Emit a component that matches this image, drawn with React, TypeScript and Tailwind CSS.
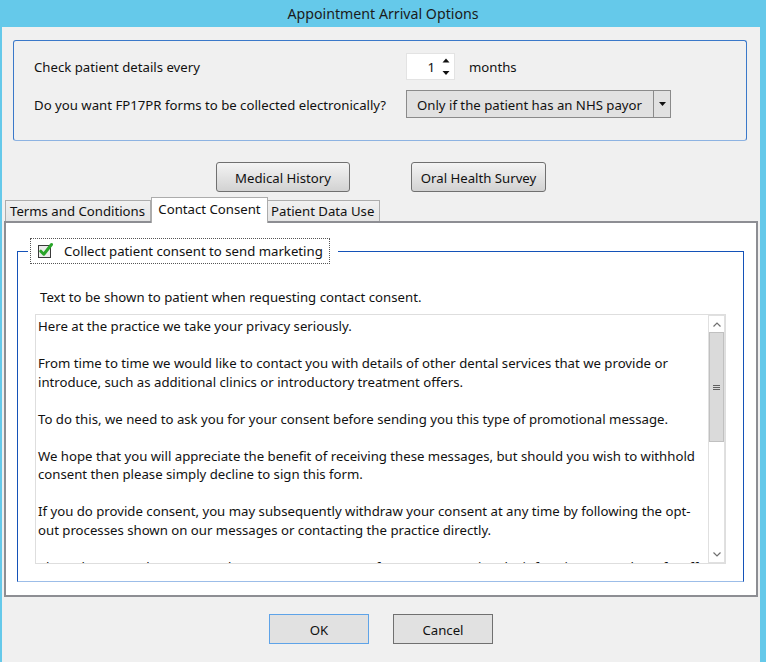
import React from "react";

const lines = [
  "Here at the practice we take your privacy seriously.",
  "",
  "From time to time we would like to contact you with details of other dental services that we provide or",
  "introduce, such as additional clinics or introductory treatment offers.",
  "",
  "To do this, we need to ask you for your consent before sending you this type of promotional message.",
  "",
  "We hope that you will appreciate the benefit of receiving these messages, but should you wish to withhold",
  "consent then please simply decline to sign this form.",
  "",
  "If you do provide consent, you may subsequently withdraw your consent at any time by following the opt-",
  "out processes shown on our messages or contacting the practice directly.",
  "",
  "Please be aware that you can change your consent preferences at any time by informing a member of staff.",
];

export default function App() {
  return (
    <div className="w-[766px] h-[662px] overflow-hidden bg-[#65c9ea] flex flex-col font-['Noto_Sans',sans-serif] text-[#111]">
      <div className="h-[27px] shrink-0 flex items-center justify-center text-[14.2px] text-[#1b1b1b]">
        Appointment Arrival Options
      </div>
      <div className="flex-1 ml-[2px] mr-[6px] bg-[#f0f0f0] flex flex-col text-[13.2px]">
        {/* top group */}
        <div className="shrink-0 mt-[13px] ml-[11px] mr-[13px] h-[101px] rounded-[3px] border border-[#3a78c9] border-b-[#8db3e2] pl-[20px] pt-[12px] flex flex-col gap-[10px]">
          <div className="flex items-center h-[27px]">
            <div className="w-[372px] pt-[3px]">Check patient details every</div>
            <div className="w-[49px] h-[27px] bg-white border border-[#e3e3e3] flex items-center justify-end pr-[4px]">
              <span className="mr-[7px] pt-[3px]">1</span>
              <svg width="8" height="18" viewBox="0 0 8 18">
                <path d="M0.5 4.5 L4 0.5 L7.5 4.5 Z" fill="#111" />
                <path d="M0.5 13 L4 17 L7.5 13 Z" fill="#111" />
              </svg>
            </div>
            <div className="ml-[14px] pt-[3px]">months</div>
          </div>
          <div className="flex items-center h-[28px]">
            <div className="w-[372px] pt-[3px]">Do you want FP17PR forms to be collected electronically?</div>
            <div className="w-[265px] h-[28px] bg-[#e1e1e1] border border-[#8a8a8a] flex items-center">
              <div className="flex-1 pl-[10px] pt-[3px]">Only if the patient has an NHS payor</div>
              <div className="w-[17px] h-full border-l border-[#8a8a8a] flex items-center justify-center">
                <svg width="7" height="4" viewBox="0 0 7 4">
                  <path d="M0 0 L7 0 L3.5 4 Z" fill="#111" />
                </svg>
              </div>
            </div>
          </div>
        </div>

        {/* buttons */}
        <div className="shrink-0 mt-[21px] ml-[214px] flex gap-[61px]">
          <button className="w-[134px] h-[30px] pt-[3px] rounded-[3px] border border-[#707070] bg-gradient-to-b from-[#f4f4f4] to-[#d2d2d2] flex items-center justify-center text-[#111]">
            Medical History
          </button>
          <button className="w-[135px] h-[30px] pt-[3px] rounded-[3px] border border-[#707070] bg-gradient-to-b from-[#f4f4f4] to-[#d2d2d2] flex items-center justify-center text-[#111]">
            Oral Health Survey
          </button>
        </div>

        {/* tabs */}
        <div className="shrink-0 mt-[5px] -mb-[2px] ml-[3px] flex items-end h-[26px]">
          <div className="mb-[2px] w-[146px] h-[21px] pt-[2px] border border-b-0 border-[#acacac] bg-gradient-to-b from-[#f0f0f0] to-[#e5e5e5] flex items-center pl-[4px]">
            Terms and Conditions
          </div>
          <div className="relative z-10 w-[117px] h-[26px] border border-b-0 border-[#acacac] bg-white flex items-center justify-center pb-[1px]">
            Contact Consent
          </div>
          <div className="mb-[2px] w-[112px] h-[21px] pt-[2px] border border-b-0 border-l-0 border-[#acacac] bg-gradient-to-b from-[#f0f0f0] to-[#e5e5e5] flex items-center pl-[3px]">
            Patient Data Use
          </div>
        </div>

        {/* tab panel */}
        <div className="shrink-0 ml-[2px] mr-[2px] h-[376px] border-2 border-[#8d8e93] bg-white flex flex-col">
          <div className="relative mt-[28px] ml-[11px] mr-[12px] h-[331px] border border-[#1452b8] border-b-[#9cbde8] flex flex-col">
            <div className="absolute left-[10px] top-[-14px] bg-white pl-[2px] pr-[8px]">
              <div className="w-[300px] h-[26px] border border-dotted border-[#555] flex items-center pl-[6px]">
                <svg width="18" height="18" viewBox="0 0 18 18" className="-mt-[2px]">
                  <rect x="1.5" y="4.5" width="12" height="12" fill="#ececec" stroke="#3a3a3a" />
                  <path d="M3.8 10.2 L6.8 13.2 L14.5 3.5" fill="none" stroke="#2aa52a" strokeWidth="3" strokeLinejoin="round" strokeLinecap="round" />
                </svg>
                <span className="ml-[9px] pt-[2px]">Collect patient consent to send marketing</span>
              </div>
            </div>
            <div className="mt-[36px] ml-[22px] leading-[18px]">
              Text to be shown to patient when requesting contact consent.
            </div>
            <div className="mt-[8px] ml-[17px] mr-[17px] h-[250px] border border-[#dedede] bg-white flex overflow-hidden">
              <div className="flex-1 overflow-hidden pl-[2px] pt-[2px] leading-[18.5px]">
                {lines.map((l, i) => (
                  <div key={i} className="whitespace-nowrap h-[18.5px]">
                    {l}
                  </div>
                ))}
              </div>
              <div className="w-[17px] h-full border border-[#e0e0e0] flex flex-col bg-white">
                <div className="h-[16px] flex items-center justify-center">
                  <svg width="8" height="5" viewBox="0 0 8 5">
                    <path d="M0.5 4.5 L4 1 L7.5 4.5" fill="none" stroke="#707070" strokeWidth="1.2" />
                  </svg>
                </div>
                <div className="h-[110px] bg-[#dadada] border border-[#c0c0c0] flex flex-col items-center justify-center gap-[1px]">
                  <div className="w-[7px] h-[1px] bg-[#606060]" />
                  <div className="w-[7px] h-[1px] bg-[#606060]" />
                  <div className="w-[7px] h-[1px] bg-[#606060]" />
                </div>
                <div className="flex-1" />
                <div className="h-[16px] flex items-center justify-center">
                  <svg width="8" height="5" viewBox="0 0 8 5">
                    <path d="M0.5 0.5 L4 4 L7.5 0.5" fill="none" stroke="#707070" strokeWidth="1.2" />
                  </svg>
                </div>
              </div>
            </div>
          </div>
        </div>

        {/* OK / Cancel */}
        <div className="shrink-0 mt-[17px] ml-[267px] flex gap-[24px]">
          <button className="w-[100px] h-[30px] pt-[3px] border border-[#5ea3e8] bg-[#e1e1e1] flex items-center justify-center text-[#111]">
            OK
          </button>
          <button className="w-[100px] h-[30px] pt-[3px] border border-[#707070] bg-[#e1e1e1] flex items-center justify-center text-[#111]">
            Cancel
          </button>
        </div>
      </div>
    </div>
  );
}
